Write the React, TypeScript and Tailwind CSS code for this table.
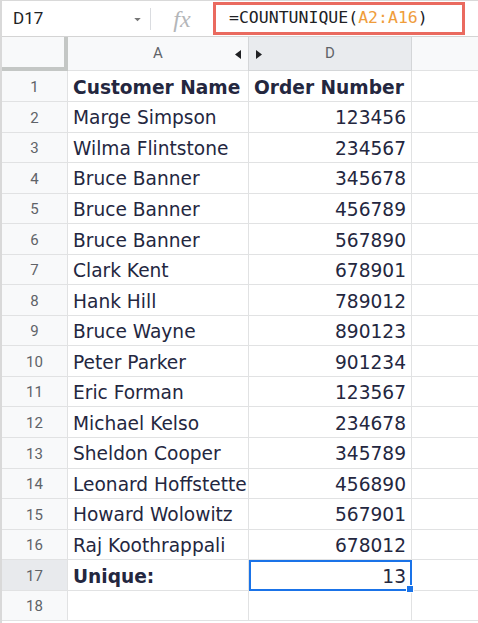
import { ChevronDown } from "lucide-react";

const rows: Array<[string, string]> = [
  ["Marge Simpson", "123456"],
  ["Wilma Flintstone", "234567"],
  ["Bruce Banner", "345678"],
  ["Bruce Banner", "456789"],
  ["Bruce Banner", "567890"],
  ["Clark Kent", "678901"],
  ["Hank Hill", "789012"],
  ["Bruce Wayne", "890123"],
  ["Peter Parker", "901234"],
  ["Eric Forman", "123567"],
  ["Michael Kelso", "234678"],
  ["Sheldon Cooper", "345789"],
  ["Leonard Hoffstetter", "456890"],
  ["Howard Wolowitz", "567901"],
  ["Raj Koothrappali", "678012"],
];

// cell text sits a little low in the row, like Sheets does
const cellText = "pt-[3px] text-[18.6px] text-[#24273f] [font-family:'DejaVu_Sans',Verdana,sans-serif]";

function RowNum({ n, active }: { n: number; active?: boolean }) {
  return (
    <div
      className={`w-[66px] shrink-0 flex items-center justify-center pt-[2px] border-r border-b border-[#e1e2e3] text-[15px] text-[#5f6368] [font-family:Roboto,Arial,sans-serif] ${
        active ? "bg-[#e8eaed]" : "bg-[#f8f9fa]"
      }`}
    >
      {n}
    </div>
  );
}

export default function App() {
  return (
    <div className="w-[478px] h-[623px] bg-white overflow-hidden border-t border-l-2 border-[#d9d9d9] flex flex-col">
      {/* formula bar */}
      <div className="h-[36px] shrink-0 flex items-center border-b border-[#d4d4d4]">
        <div className="w-[148px] shrink-0 flex items-center pl-[11px] pr-[6px] h-full">
          <span className="text-[17px] text-[#202124] [font-family:Roboto,Arial,sans-serif]">D17</span>
          <ChevronDown className="ml-auto mt-[2px] h-[13px] w-[13px] text-[#777]" strokeWidth={0} fill="#777" />
        </div>
        <div className="w-px h-[22px] bg-[#dadce0]" />
        <div className="w-[62px] shrink-0 flex items-center justify-center">
          <span className="text-[24px] italic text-[#b4b6b9] [font-family:'Liberation_Serif',serif]">fx</span>
        </div>
        <div className="h-[33px] w-[252px] border-[3px] border-[#ea6a5f] flex items-center pl-[13px] text-[16.5px] text-[#202124] [font-family:'DejaVu_Sans_Mono',monospace]">
          =COUNTUNIQUE(<span className="text-[#ef9d3b]">A2:A16</span>)
        </div>
      </div>

      {/* column headers */}
      <div className="h-[34px] shrink-0 flex bg-[#f8f9fa] text-[15px] text-[#5f6368] [font-family:Roboto,Arial,sans-serif]">
        <div className="w-[66px] shrink-0 border-r-4 border-b-4 border-[#c4c7c5]" />
        <div className="w-[180px] shrink-0 relative flex items-center justify-center border-b border-[#e1e2e3]">
          A
          <svg className="absolute right-[7px] top-[13px]" width="6" height="9" viewBox="0 0 6 9">
            <path d="M6 0 L0 4.5 L6 9 Z" fill="#202124" />
          </svg>
        </div>
        <div className="w-[164px] shrink-0 relative flex items-center justify-center bg-[#e9ebee] border-l border-r border-b border-[#d4d6d8]">
          D
          <svg className="absolute left-[7px] top-[13px]" width="6" height="9" viewBox="0 0 6 9">
            <path d="M0 0 L6 4.5 L0 9 Z" fill="#202124" />
          </svg>
        </div>
        <div className="flex-1 border-b border-[#e1e2e3]" />
      </div>

      {/* header row */}
      <div className="h-[31px] shrink-0 flex">
        <RowNum n={1} />
        <div className={`w-[181px] shrink-0 flex items-center pl-[5px] border-r border-b border-[#e1e2e3] font-bold whitespace-nowrap overflow-hidden ${cellText}`}>
          Customer Name
        </div>
        <div className={`w-[163px] shrink-0 flex items-center pl-[5px] border-r border-b border-[#e1e2e3] font-bold whitespace-nowrap overflow-hidden ${cellText}`}>
          Order Number
        </div>
        <div className="flex-1 border-b border-[#e1e2e3]" />
      </div>

      {rows.map(([name, num], i) => (
        <div key={i} className="h-[30.56px] shrink-0 flex">
          <RowNum n={i + 2} />
          <div className={`w-[181px] shrink-0 flex items-center pl-[5px] border-r border-b border-[#e1e2e3] whitespace-nowrap overflow-hidden ${cellText}`}>
            {name}
          </div>
          <div className={`w-[163px] shrink-0 flex items-center justify-end pr-[5px] border-r border-b border-[#e1e2e3] ${cellText}`}>
            {num}
          </div>
          <div className="flex-1 border-b border-[#e1e2e3]" />
        </div>
      ))}

      {/* unique row */}
      <div className="h-[30.56px] shrink-0 flex">
        <RowNum n={17} active />
        <div className={`w-[181px] shrink-0 flex items-center pl-[5px] border-r border-b border-[#e1e2e3] font-bold ${cellText}`}>
          Unique:
        </div>
        <div className={`w-[163px] shrink-0 relative flex items-center justify-end pr-[4px] border-2 border-[#1a73e8] ${cellText}`}>
          13
          <div className="absolute -right-[4px] -bottom-[4px] w-[6px] h-[6px] bg-[#1a73e8] border border-white box-content" />
        </div>
        <div className="flex-1 border-b border-[#e1e2e3]" />
      </div>

      <div className="h-[30.56px] shrink-0 flex">
        <RowNum n={18} />
        <div className="w-[181px] shrink-0 border-r border-b border-[#e1e2e3]" />
        <div className="w-[163px] shrink-0 border-r border-b border-[#e1e2e3]" />
        <div className="flex-1 border-b border-[#e1e2e3]" />
      </div>
    </div>
  );
}
